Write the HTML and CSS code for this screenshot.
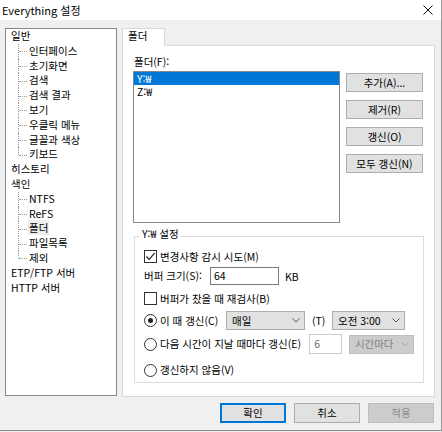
FILE: index.html
```html
<!DOCTYPE html>
<html lang="ko">
<head>
<meta charset="utf-8">
<title>Everything 설정</title>
<link rel="stylesheet" href="styles.css">
</head>
<body>
<div class="window">
  <div class="titlebar">
    <span class="title">Everything 설정</span>
    <svg class="close" width="10" height="10" viewBox="0 0 10 10"><path d="M0.5 0.5 L9.5 9.5 M9.5 0.5 L0.5 9.5" stroke="#111" stroke-width="1" fill="none"/></svg>
  </div>
  <div class="main">
    <div class="tree">
      <ul class="root">
        <li>일반
          <ul class="sub">
            <li>인터페이스</li>
            <li>초기화면</li>
            <li>검색</li>
            <li>검색 결과</li>
            <li>보기</li>
            <li>우클릭 메뉴</li>
            <li>글꼴과 색상</li>
            <li>키보드</li>
          </ul>
        </li>
        <li>히스토리</li>
        <li>색인
          <ul class="sub">
            <li>NTFS</li>
            <li>ReFS</li>
            <li><span class="current">폴더</span></li>
            <li>파일목록</li>
            <li>제외</li>
          </ul>
        </li>
        <li>ETP/FTP 서버</li>
        <li>HTTP 서버</li>
      </ul>
    </div>
    <div class="tabs">
      <div class="tabbar"><div class="tab">폴더</div></div>
      <div class="panel">
        <div class="top">
          <div class="listcol">
            <div class="label">폴더(F):</div>
            <div class="list">
              <div class="row selected">Y:₩</div>
              <div class="row">Z:₩</div>
            </div>
          </div>
          <div class="btncol">
            <div class="btn">추가(A)...</div>
            <div class="btn">제거(R)</div>
            <div class="btn">갱신(O)</div>
            <div class="btn">모두 갱신(N)</div>
          </div>
        </div>
        <div class="group">
          <div class="legend">Y:₩ 설정</div>
          <div class="grow r1">
            <span class="check on"><svg width="11" height="11" viewBox="0 0 11 11"><path d="M1.5 5.5 L4.2 8.3 L9.6 2.2" stroke="#222" stroke-width="1.2" fill="none"/></svg></span>
            <span class="ctext">변경사항 감시 시도(M)</span>
          </div>
          <div class="grow r2">
            <span class="flabel">버퍼 크기(S):</span>
            <span class="input size">64</span>
            <span class="unit">KB</span>
          </div>
          <div class="grow r3">
            <span class="check"></span>
            <span class="ctext">버퍼가 찼을 때 재검사(B)</span>
          </div>
          <div class="grow r4">
            <span class="opt w1"><span class="radio on"></span><span class="ctext">이 때 갱신(C)</span></span>
            <span class="select s1">매일<svg class="chev" width="8" height="5" viewBox="0 0 8 5"><polyline points="0.5,0.5 4,4 7.5,0.5" stroke="#555" fill="none"/></svg></span>
            <span class="tlabel">(T)</span>
            <span class="select s2">오전 3:00<svg class="chev" width="8" height="5" viewBox="0 0 8 5"><polyline points="0.5,0.5 4,4 7.5,0.5" stroke="#555" fill="none"/></svg></span>
          </div>
          <div class="grow r5">
            <span class="opt w2"><span class="radio"></span><span class="ctext">다음 시간이 지날 때마다 갱신(E)</span></span>
            <span class="input hours disabled">6</span>
            <span class="select s3 disabled">시간마다<svg class="chev" width="8" height="5" viewBox="0 0 8 5"><polyline points="0.5,0.5 4,4 7.5,0.5" stroke="#a8a8a8" fill="none"/></svg></span>
          </div>
          <div class="grow r6">
            <span class="opt"><span class="radio"></span><span class="ctext">갱신하지 않음(V)</span></span>
          </div>
        </div>
      </div>
    </div>
  </div>
  <div class="bottom">
    <div class="btn dlg default">확인</div>
    <div class="btn dlg">취소</div>
    <div class="btn dlg off">적용</div>
  </div>
</div>
</body>
</html>
```
FILE: styles.css
```css
* { box-sizing: border-box; }
html, body { margin: 0; padding: 0; }
body {
  background: #f0f0f0;
  font-family: "Noto Sans CJK KR", "Liberation Sans", sans-serif;
  font-size: 10.5px;
  color: #000;
}
.window {
  width: 442px;
  height: 431px;
  border-right: 1px solid #9a9a9a;
  border-bottom: 1px solid #8a8a8a;
  background: #f0f0f0;
}
.titlebar {
  height: 20px;
  background: #fff;
  display: flex;
  align-items: center;
  justify-content: space-between;
  padding: 0 8px 0 2px;
}
.title { font-size: 11px; line-height: 20px; }
.close { display: block; margin-top: -1px; }
.main {
  display: flex;
  padding: 8px 0 0 5px;
  height: 377px;
}
.tree {
  width: 112px;
  height: 368px;
  background: #fff;
  border: 1px solid #828790;
  padding-left: 5px;
  overflow: hidden;
}
.tree ul { list-style: none; margin: 0; padding: 0; }
.tree li { line-height: 14.8px; white-space: nowrap; }
.sub { margin-left: 7px !important; }
.sub li { position: relative; padding-left: 11px; }
.sub li::before {
  content: "";
  position: absolute;
  left: 0; top: 0; bottom: 0;
  border-left: 1px dotted #9a9a9a;
}
.sub li:last-child::before { bottom: 50%; }
.sub li::after {
  content: "";
  position: absolute;
  left: 1px; top: 50%;
  width: 8px;
  border-top: 1px dotted #9a9a9a;
}
.current { background: #eeeeee; padding: 0 1px; margin-left: -1px; }
.tabs {
  margin-left: 5px;
  width: 313px;
  display: flex;
  flex-direction: column;
}
.tabbar { height: 17px; display: flex; }
.tab {
  position: relative;
  z-index: 1;
  width: 43px;
  height: 18px;
  background: #fff;
  border: 1px solid #d9d9d9;
  border-bottom: none;
  padding-left: 5px;
  line-height: 14px;
}
.panel {
  height: 352px;
  background: #fff;
  border: 1px solid #d9d9d9;
  padding-top: 9px;
}
.top { display: flex; }
.listcol { margin-left: 10px; }
.label { margin-left: 1px; line-height: 14px; margin-bottom: 2px; }
.list {
  width: 207px;
  height: 152px;
  border: 1px solid #828790;
  background: #fff;
}
.row { height: 13px; line-height: 13px; padding-left: 3px; }
.row.selected { background: #0078d7; color: #fff; }
.btncol {
  margin-left: 6px;
  margin-top: 18px;
  display: flex;
  flex-direction: column;
  gap: 8px;
}
.btn {
  width: 77px;
  height: 19px;
  background: #e1e1e1;
  border: 1px solid #adadad;
  display: flex;
  align-items: center;
  justify-content: center;
  line-height: 14px;
}
.group {
  position: relative;
  margin: 13px 0 0 11px;
  width: 290px;
  border: 1px solid #dcdcdc;
  padding: 10px 9px 2px;
}
.legend {
  position: absolute;
  top: -10px;
  left: 5px;
  padding: 0 2px;
  background: #fff;
  line-height: 14px;
}
.grow { display: flex; align-items: center; white-space: nowrap; }
.r1 { height: 19px; }
.r2 { height: 20px; }
.r3 { height: 19px; margin-top: 3px; }
.r4 { height: 21px; margin-top: 2px; }
.r5 { height: 20px; margin-top: 3px; }
.r6 { height: 20px; margin-top: 6px; }
.check {
  width: 13px; height: 13px;
  border: 1px solid #333;
  background: #fff;
  display: flex;
  align-items: center;
  justify-content: center;
  flex: none;
}
.check svg { display: block; }
.radio {
  width: 13px; height: 13px;
  border: 1px solid #333;
  border-radius: 50%;
  background: #fff;
  display: flex;
  align-items: center;
  justify-content: center;
  flex: none;
}
.radio.on::after {
  content: "";
  width: 5px; height: 5px;
  border-radius: 50%;
  background: #222;
}
.ctext { margin-left: 3px; line-height: 14px; }
.opt { display: flex; align-items: center; }
.w1 { width: 82px; }
.w2 { width: 168px; }
.flabel { width: 66px; line-height: 14px; }
.input {
  height: 18px;
  border: 1px solid #7a7a7a;
  background: #fff;
  padding-left: 3px;
  line-height: 16px;
}
.size { width: 69px; }
.unit { margin-left: 6px; }
.hours { width: 33px; height: 20px; line-height: 18px; padding-left: 4px; }
.input.disabled { border-color: #cccccc; color: #6d6d6d; }
.select {
  height: 19px;
  background: #e1e1e1;
  border: 1px solid #adadad;
  display: flex;
  align-items: center;
  justify-content: space-between;
  padding: 0 4px 0 5px;
  line-height: 14px;
}
.chev { display: block; }
.s1 { width: 79px; }
.s2 { width: 73px; }
.tlabel { margin-left: 7px; width: 20px; }
.s3 { width: 66px; margin-left: 7px; }
.select.disabled { background: #cccccc; border-color: #bfbfbf; color: #838383; }
.bottom {
  display: flex;
  justify-content: flex-end;
  gap: 8px;
  padding: 6px 7px 0 0;
}
.btn.dlg { width: 66px; height: 20px; }
.btn.default { border: 1px solid #0078d7; box-shadow: inset 0 0 0 1px #0078d7; }
.btn.off { background: #cccccc; border-color: #bfbfbf; color: #8a8a8a; }
```
